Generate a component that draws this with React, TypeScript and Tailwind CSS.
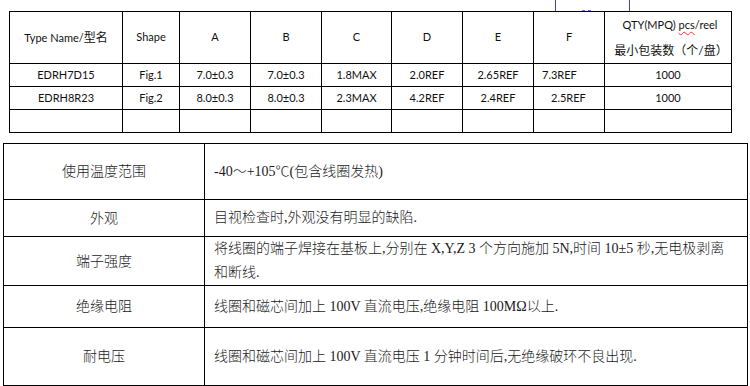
import React from 'react';

type SpecRow = {
  name: string;
  shape: string;
  a: string;
  b: string;
  c: string;
  d: string;
  e: string;
  f: string;
  qty: string;
};

const SPEC_ROWS: SpecRow[] = [
  { name: 'EDRH7D15', shape: 'Fig.1', a: '7.0±0.3', b: '7.0±0.3', c: '1.8MAX', d: '2.0REF', e: '2.65REF', f: '7.3REF', qty: '1000' },
  { name: 'EDRH8R23', shape: 'Fig.2', a: '8.0±0.3', b: '8.0±0.3', c: '2.3MAX', d: '4.2REF', e: '2.4REF', f: '2.5REF', qty: '1000' },
];

type TestRow = {
  label: string;
  text: React.ReactNode;
  h: string;
};

const SANS = "font-['Lato','Open_Sans','Noto_Sans_CJK_SC',sans-serif]";
const SERIF_CJK = "font-['Liberation_Serif','Noto_Sans_CJK_SC',serif]";

const TEST_ROWS: TestRow[] = [
  { label: '使用温度范围', text: '-40～+105℃(包含线圈发热)', h: 'h-[56px]' },
  { label: '外观', text: '目视检查时,外观没有明显的缺陷.', h: 'h-[37px]' },
  {
    label: '端子强度',
    text: (
      <>
        将线圈的端子焊接在基板上,分别在 X,Y,Z 3 个方向施加 5N,时间 10±5 秒,无电极剥离
        <br />
        和断线.
      </>
    ),
    h: 'h-[43px]',
  },
  { label: '绝缘电阻', text: '线圈和磁芯间加上 100V 直流电压,绝缘电阻 100MΩ以上.', h: 'h-[42px]' },
  { label: '耐电压', text: '线圈和磁芯间加上 100V 直流电压 1 分钟时间后,无绝缘破环不良出现.', h: 'h-[58px]' },
  { label: '', text: '', h: 'h-[30px]' },
];

export default function App() {
  const td = 'border border-black text-center align-middle p-0';
  const cjk = 'text-[12px]';

  return (
    <div className="relative w-[750px] h-[386px] overflow-hidden bg-white text-[#111]">
      {/* figure lines peeking in from above */}
      <div className="absolute left-[555px] top-0 h-[11px] w-px bg-[#3b3bff]" />
      <div className="absolute left-[629px] top-0 h-[11px] w-px bg-[#3b3bff]" />
      <div className="absolute left-[582px] top-[10px] h-px w-[3px] bg-[#6b6bff]" />
      <div className="absolute left-[588px] top-[10px] h-px w-[3px] bg-[#6b6bff]" />

      <div className="pl-[9px] pt-[11px]">
        <table className={`table-fixed border-collapse w-[722px] text-[11px] ${SANS}`}>
          <colgroup>
            <col className="w-[113px]" />
            <col className="w-[57px]" />
            <col className="w-[71px]" />
            <col className="w-[71px]" />
            <col className="w-[70px]" />
            <col className="w-[71px]" />
            <col className="w-[71px]" />
            <col className="w-[71px]" />
            <col className="w-[127px]" />
          </colgroup>
          <tbody>
            <tr className="h-[52px]">
              <td className={td}>
                Type Name/<span className={cjk}>型名</span>
              </td>
              <td className={td}>Shape</td>
              <td className={td}>A</td>
              <td className={td}>B</td>
              <td className={td}>C</td>
              <td className={td}>D</td>
              <td className={td}>E</td>
              <td className={td}>F</td>
              <td className={td}>
                <div className="flex flex-col items-center gap-[10px] leading-[16px]">
                  <span className="pl-[4px]">
                    QTY(MPQ){' '}
                    <span className="underline decoration-wavy decoration-red-500 decoration-1 underline-offset-2">pcs</span>
                    /reel
                  </span>
                  <span className={`${cjk} pl-[6px]`}>最小包装数（个/盘）</span>
                </div>
              </td>
            </tr>
            {SPEC_ROWS.map(r => (
              <tr key={r.name} className="h-[23px]">
                <td className={td}>{r.name}</td>
                <td className={td}>{r.shape}</td>
                <td className={td}>{r.a}</td>
                <td className={td}>{r.b}</td>
                <td className={td}>{r.c}</td>
                <td className={td}>{r.d}</td>
                <td className={td}>{r.e}</td>
                <td className={`${td} !text-left pl-[8px]`}>
                  <span className={r.f === '2.5REF' ? 'pl-[9px]' : ''}>{r.f}</span>
                </td>
                <td className={td}>{r.qty}</td>
              </tr>
            ))}
            <tr className="h-[23px]">
              {Array.from({ length: 9 }).map((_, i) => (
                <td key={i} className={td} />
              ))}
            </tr>
          </tbody>
        </table>
      </div>

      <div className="pl-[3px] pt-[10px]">
        <table className={`table-fixed border-collapse w-[744px] text-[14px] text-[#1a1a1a] ${SERIF_CJK}`}>
          <colgroup>
            <col className="w-[201px]" />
            <col className="w-[543px]" />
          </colgroup>
          <tbody>
            {TEST_ROWS.map((r, i) => (
              <tr key={i} className={r.h}>
                <td className="border border-black text-center align-middle p-0 font-light">{r.label}</td>
                <td className="border border-black text-left align-middle py-0 pl-[9px] pr-[6px] leading-[24px] font-light">
                  {r.text}
                </td>
              </tr>
            ))}
          </tbody>
        </table>
      </div>
    </div>
  );
}
